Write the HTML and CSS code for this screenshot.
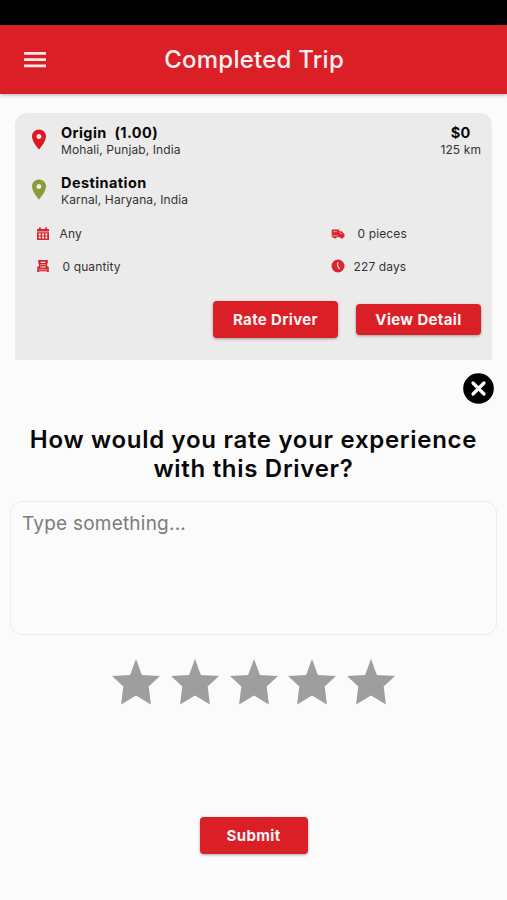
FILE: index.html
```html
<!DOCTYPE html>
<html lang="en">
<head>
<meta charset="utf-8">
<title>Completed Trip</title>
<link rel="stylesheet" href="styles.css">
</head>
<body>
<div class="status"></div>
<header class="bar">
  <svg class="menu" viewBox="0 0 22 16"><path d="M0 0h22v2.800H0zM0 6.300h22v2.800H0zM0 12.500h22v2.800H0z"/></svg>
  <h1>Completed Trip</h1>
</header>
<main>
  <section class="card">
    <div class="place">
      <svg class="pin" viewBox="0 0 24 24"><path d="M12 2C8.13 2 5 5.13 5 9c0 5.25 7 13 7 13s7-7.75 7-13c0-3.87-3.13-7-7-7zm0 9.5a2.5 2.5 0 1 1 0-5 2.5 2.5 0 0 1 0 5z"/></svg>
      <div class="text"><div class="name">Origin&nbsp; (1.00)</div><div class="sub">Mohali, Punjab, India</div></div>
      <div class="price"><div class="name">$0</div><div class="sub">125 km</div></div>
    </div>
    <div class="place">
      <svg class="pin green" viewBox="0 0 24 24"><path d="M12 2C8.13 2 5 5.13 5 9c0 5.25 7 13 7 13s7-7.75 7-13c0-3.87-3.13-7-7-7zm0 9.5a2.5 2.5 0 1 1 0-5 2.5 2.5 0 0 1 0 5z"/></svg>
      <div class="text"><div class="name">Destination</div><div class="sub">Karnal, Haryana, India</div></div>
    </div>
    <div class="facts">
      <div class="fact any"><svg viewBox="0 0 14 14"><path fill-rule="evenodd" d="M1 2h2V.5h2V2h4V.5h2V2h2v2.6H1zM1 5.3h12V13H1zM2.7 6.6v1.8h2V6.6zM6 6.6v1.8h2V6.6zM9.3 6.6v1.8h2V6.6zM2.7 9.6v1.8h2V9.6zM6 9.6v1.8h2V9.6zM9.3 9.6v1.8h2V9.6z"/></svg><span>Any</span></div>
      <div class="fact pieces"><svg viewBox="0 0 14 14"><path fill-rule="evenodd" d="M.7 2.5h7.600v1.700h2.400l2.800 3v3h-1a1.800 1.800 0 0 1-3.500 0H5.700a1.800 1.800 0 0 1-3.500 0H.7z"/><path class="line" d="M2 4.700h4M8.500 5.300l2.800 1.900M1.200 8.800h6"/></svg><span>0 pieces</span></div>
      <div class="fact qty"><svg viewBox="0 0 14 14"><path fill-rule="evenodd" d="M2.200 1h9.600v3l-.7 1v2l1.700 1v5h-2v-.7H3.200v.7h-2V8l1.700-1V5l-.7-1zM4.700 2.800v1.200h4.600V2.800zM4.300 7.400v1.200h5.400V7.400z"/><path class="line" d="M4 5.700h6M2.500 10.700h9"/></svg><span>0 quantity</span></div>
      <div class="fact days"><svg viewBox="0 0 14 14"><circle cx="7" cy="7" r="6.500"/><path class="hand" d="M6.700 3v4.100l2 3"/></svg><span>227 days</span></div>
    </div>
    <div class="actions"><button class="btn rate">Rate Driver</button><button class="btn view">View Detail</button></div>
  </section>
  <div class="closerow"><svg class="close" viewBox="0 0 31 31"><circle cx="15.500" cy="15.500" r="15.300"/><path d="M10 10l11 11M21 10L10 21"/></svg></div>
  <h2>How would you rate your experience<br>with this Driver?</h2>
  <div class="input">Type something...</div>
  <div class="stars">
    <svg viewBox="0 0 48 46"><path d="M24 0l5.900 15.900L48 17.100 36.700 27.500l2.200 18L24 36.500l-14.900 9 2.200-18L0 17.100l18.100-1.200z"/></svg>
    <svg viewBox="0 0 48 46"><path d="M24 0l5.900 15.900L48 17.100 36.700 27.500l2.200 18L24 36.500l-14.900 9 2.200-18L0 17.100l18.100-1.200z"/></svg>
    <svg viewBox="0 0 48 46"><path d="M24 0l5.900 15.900L48 17.100 36.700 27.500l2.200 18L24 36.500l-14.900 9 2.200-18L0 17.100l18.100-1.200z"/></svg>
    <svg viewBox="0 0 48 46"><path d="M24 0l5.900 15.900L48 17.100 36.700 27.500l2.200 18L24 36.500l-14.900 9 2.200-18L0 17.100l18.100-1.200z"/></svg>
    <svg viewBox="0 0 48 46"><path d="M24 0l5.900 15.900L48 17.100 36.700 27.500l2.200 18L24 36.500l-14.900 9 2.200-18L0 17.100l18.100-1.200z"/></svg>
  </div>
  <button class="btn submit">Submit</button>
</main>
</body>
</html>
```
FILE: styles.css
```css
* { box-sizing: border-box; }
body { margin: 0; height: 900px; overflow: hidden; background: #fbfbfb; color: #080808; font-family: Inter, sans-serif; }
svg { display: block; flex: none; }
.status { height: 25px; background: #000; }
.bar { height: 69px; display: flex; align-items: center; justify-content: space-between; padding: 0 163px 0 24px; background: #da1f27; box-shadow: 0 1px 4px rgba(0,0,0,.3); }
.menu { width: 22px; height: 16px; fill: #ffe6e8; }
h1 { margin: 0; font-size: 24px; line-height: 30px; font-weight: 500; letter-spacing: .24px; color: #fff0f1; white-space: nowrap; }
.card { height: 247px; margin: 19px 15px 0; padding: 11px 11px 0 12px; background: #ebebeb; border-radius: 12px 12px 0 0; }
.place { display: flex; height: 50px; }
.pin { width: 24px; height: 25px; margin-top: 3px; fill: #dc1822; }
.green { fill: #8a9c36; }
.text { margin-left: 10px; flex: 1; white-space: nowrap; }
.name { font-size: 14.500px; line-height: 18px; font-weight: 700; letter-spacing: .42px; }
.sub { font-size: 12px; line-height: 16px; letter-spacing: .1px; color: #333; }
.price { text-align: center; }
.facts { display: grid; grid-template-columns: 295px 1fr; grid-auto-rows: 32.500px; margin-top: -6.500px; padding-left: 8.500px; }
.fact { display: flex; align-items: center; font-size: 12px; letter-spacing: .12px; color: #333; }
.fact svg { width: 14px; height: 14px; fill: #da2630; }
.line { fill: none; stroke: #ebebeb; stroke-width: .6; }
.hand { fill: none; stroke: #ffd9db; stroke-width: 1.100; }
.any svg + span { margin-left: 10px; }
.pieces svg + span { margin-left: 13px; }
.qty svg + span { margin-left: 13px; }
.days svg + span { margin-left: 9px; }
.actions { display: flex; align-items: center; justify-content: flex-end; gap: 18px; margin-top: 18.500px; height: 37px; }
.btn { display: flex; align-items: center; justify-content: center; padding: 0; border: 0; border-radius: 4px; background: #da1f27; color: #fff4f4; font: 700 15px Inter, sans-serif; letter-spacing: .35px; box-shadow: 0 1px 3px rgba(0,0,0,.35); white-space: nowrap; }
.rate { width: 125px; height: 37px; }
.view { width: 125px; height: 31px; }
.closerow { display: flex; justify-content: flex-end; padding: 13px 13px 0 0; }
.close { width: 31px; height: 31px; }
.close path { fill: none; stroke: #fff; stroke-width: 3.200; stroke-linecap: round; }
h2 { margin: 21px 0 0; text-align: center; font-size: 24px; line-height: 29px; font-weight: 600; letter-spacing: .7px; white-space: nowrap; }
.input { height: 134px; margin: 18px 10px 0; padding: 10px 11px; border: 1px solid #ebebeb; border-radius: 12px; font-size: 19px; line-height: 24px; letter-spacing: .22px; color: #7b7b7b; }
.stars { display: flex; justify-content: center; gap: 10.700px; margin-top: 24px; }
.stars svg { width: 48px; height: 46px; fill: #9e9e9e; }
.submit { width: 108px; height: 37px; margin: 112px auto 0; }
```
